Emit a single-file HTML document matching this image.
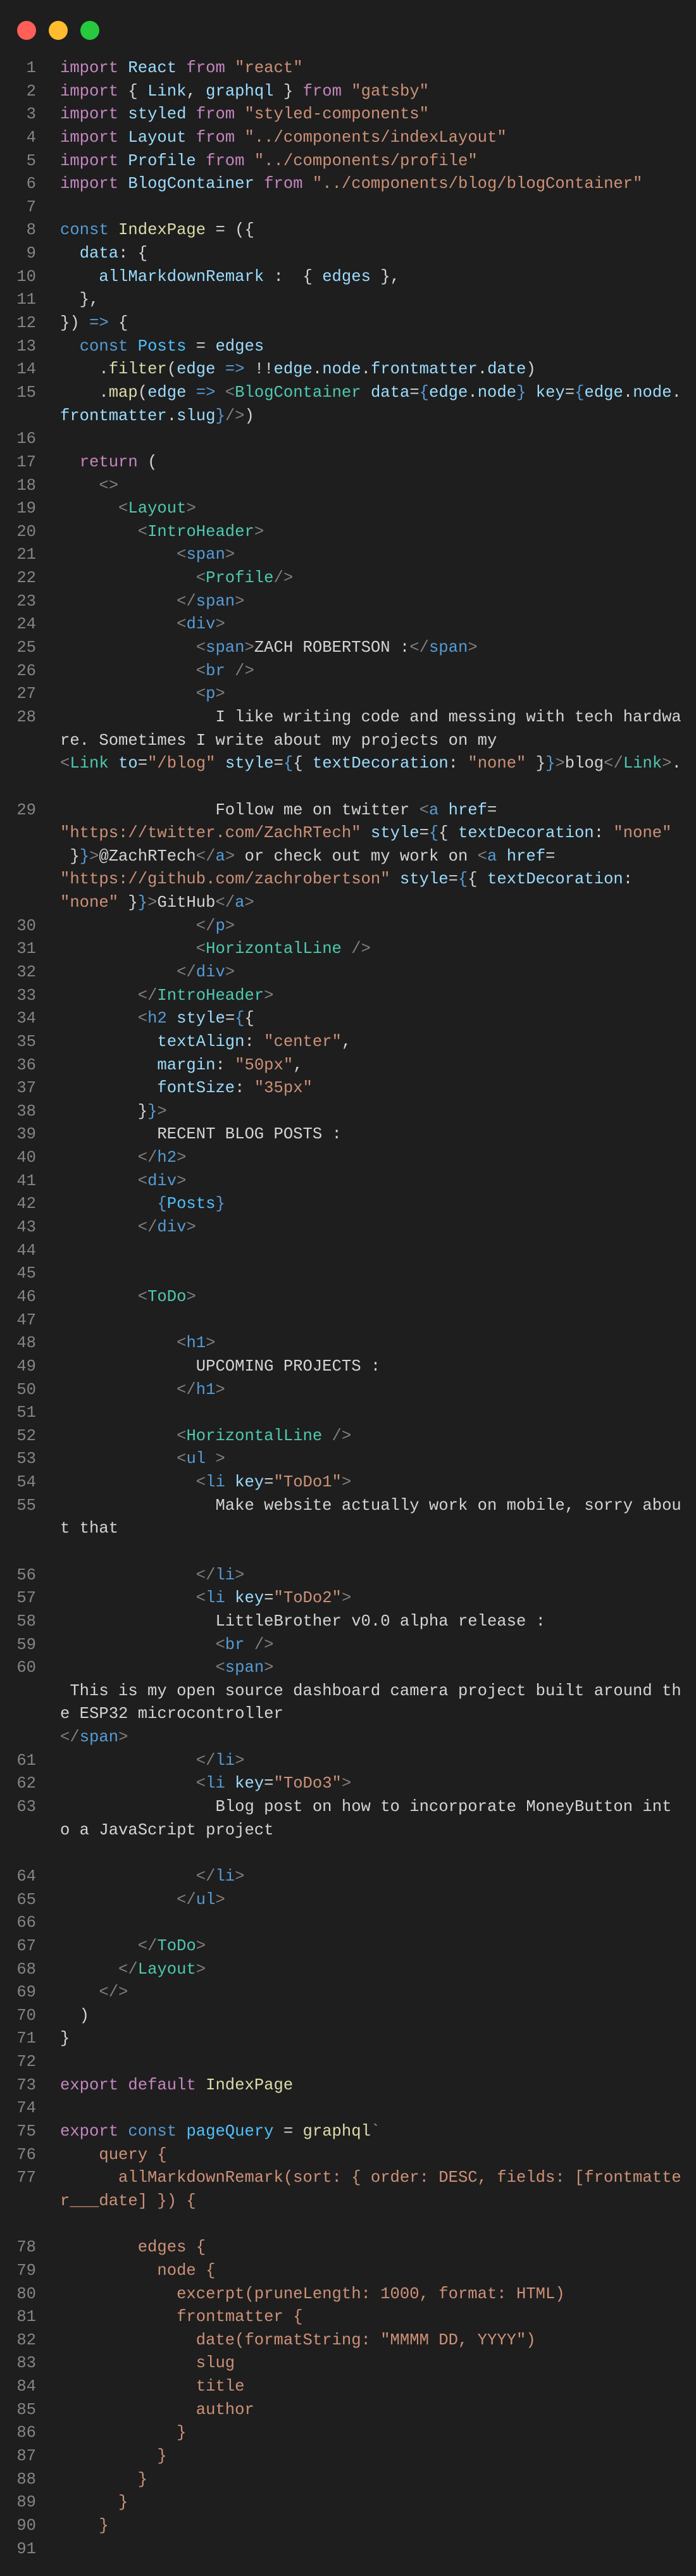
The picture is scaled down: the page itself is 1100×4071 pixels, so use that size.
<!DOCTYPE html>
<html><head><meta charset="utf-8"><style>
html,body{margin:0;padding:0;background:#1e1e1e;}
body{width:1100px;height:4071px;overflow:hidden;position:relative;font-family:"Liberation Mono",monospace;font-size:25.57px;color:#d4d4d4;}
.dot{position:absolute;top:33px;width:30px;height:30px;border-radius:50%;}
#code{position:absolute;top:90px;left:0;width:1100px;}
.r{position:relative;height:36.65px;line-height:36.65px;white-space:pre;padding-left:95px;}
.n{position:absolute;left:0;width:57px;text-align:right;color:#858585;}
.k{color:#c586c0}.b{color:#569cd6}.v{color:#9cdcfe}.s{color:#ce9178}.t{color:#4ec9b0}.g{color:#808080}.y{color:#dcdcaa}.q{color:#4fc1ff}
</style></head><body>
<div class="dot" style="left:27px;background:#ff5f56"></div>
<div class="dot" style="left:77px;background:#ffbd2e"></div>
<div class="dot" style="left:127px;background:#27c93f"></div>
<div id="code">
<div class="r"><span class="n">1</span><span class="k">import</span> <span class="v">React</span> <span class="k">from</span> <span class="s">"react"</span></div>
<div class="r"><span class="n">2</span><span class="k">import</span> { <span class="v">Link</span>, <span class="v">graphql</span> } <span class="k">from</span> <span class="s">"gatsby"</span></div>
<div class="r"><span class="n">3</span><span class="k">import</span> <span class="v">styled</span> <span class="k">from</span> <span class="s">"styled-components"</span></div>
<div class="r"><span class="n">4</span><span class="k">import</span> <span class="v">Layout</span> <span class="k">from</span> <span class="s">"../components/indexLayout"</span></div>
<div class="r"><span class="n">5</span><span class="k">import</span> <span class="v">Profile</span> <span class="k">from</span> <span class="s">"../components/profile"</span></div>
<div class="r"><span class="n">6</span><span class="k">import</span> <span class="v">BlogContainer</span> <span class="k">from</span> <span class="s">"../components/blog/blogContainer"</span></div>
<div class="r"><span class="n">7</span></div>
<div class="r"><span class="n">8</span><span class="b">const</span> <span class="y">IndexPage</span> = ({</div>
<div class="r"><span class="n">9</span>  <span class="v">data</span>: {</div>
<div class="r"><span class="n">10</span>    <span class="v">allMarkdownRemark</span> :  { <span class="v">edges</span> },</div>
<div class="r"><span class="n">11</span>  },</div>
<div class="r"><span class="n">12</span>}) <span class="b">=&gt;</span> {</div>
<div class="r"><span class="n">13</span>  <span class="b">const</span> <span class="q">Posts</span> = <span class="v">edges</span></div>
<div class="r"><span class="n">14</span>    .<span class="y">filter</span>(<span class="v">edge</span> <span class="b">=&gt;</span> !!<span class="v">edge</span>.<span class="v">node</span>.<span class="v">frontmatter</span>.<span class="v">date</span>)</div>
<div class="r"><span class="n">15</span>    .<span class="y">map</span>(<span class="v">edge</span> <span class="b">=&gt;</span> <span class="g">&lt;</span><span class="t">BlogContainer</span> <span class="v">data</span>=<span class="b">{</span><span class="v">edge</span>.<span class="v">node</span><span class="b">}</span> <span class="v">key</span>=<span class="b">{</span><span class="v">edge</span>.<span class="v">node</span>.</div>
<div class="r"><span class="v">frontmatter</span>.<span class="v">slug</span><span class="b">}</span><span class="g">/&gt;</span>)</div>
<div class="r"><span class="n">16</span></div>
<div class="r"><span class="n">17</span>  <span class="k">return</span> (</div>
<div class="r"><span class="n">18</span>    <span class="g">&lt;&gt;</span></div>
<div class="r"><span class="n">19</span>      <span class="g">&lt;</span><span class="t">Layout</span><span class="g">&gt;</span></div>
<div class="r"><span class="n">20</span>        <span class="g">&lt;</span><span class="t">IntroHeader</span><span class="g">&gt;</span></div>
<div class="r"><span class="n">21</span>            <span class="g">&lt;</span><span class="b">span</span><span class="g">&gt;</span></div>
<div class="r"><span class="n">22</span>              <span class="g">&lt;</span><span class="t">Profile</span><span class="g">/&gt;</span></div>
<div class="r"><span class="n">23</span>            <span class="g">&lt;/</span><span class="b">span</span><span class="g">&gt;</span></div>
<div class="r"><span class="n">24</span>            <span class="g">&lt;</span><span class="b">div</span><span class="g">&gt;</span></div>
<div class="r"><span class="n">25</span>              <span class="g">&lt;</span><span class="b">span</span><span class="g">&gt;</span>ZACH ROBERTSON :<span class="g">&lt;/</span><span class="b">span</span><span class="g">&gt;</span></div>
<div class="r"><span class="n">26</span>              <span class="g">&lt;</span><span class="b">br</span> <span class="g">/&gt;</span></div>
<div class="r"><span class="n">27</span>              <span class="g">&lt;</span><span class="b">p</span><span class="g">&gt;</span></div>
<div class="r"><span class="n">28</span>                I like writing code and messing with tech hardwa</div>
<div class="r">re. Sometimes I write about my projects on my</div>
<div class="r"><span class="g">&lt;</span><span class="t">Link</span> <span class="v">to</span>=<span class="s">"/blog"</span> <span class="v">style</span>=<span class="b">{</span>{ <span class="v">textDecoration</span>: <span class="s">"none"</span> }<span class="b">}</span><span class="g">&gt;</span>blog<span class="g">&lt;/</span><span class="t">Link</span><span class="g">&gt;</span>.</div>
<div class="r"></div>
<div class="r"><span class="n">29</span>                Follow me on twitter <span class="g">&lt;</span><span class="b">a</span> <span class="v">href</span>=</div>
<div class="r"><span class="s">"https://twitter.com/ZachRTech"</span> <span class="v">style</span>=<span class="b">{</span>{ <span class="v">textDecoration</span>: <span class="s">"none"</span></div>
<div class="r"> }<span class="b">}</span><span class="g">&gt;</span>@ZachRTech<span class="g">&lt;/</span><span class="b">a</span><span class="g">&gt;</span> or check out my work on <span class="g">&lt;</span><span class="b">a</span> <span class="v">href</span>=</div>
<div class="r"><span class="s">"https://github.com/zachrobertson"</span> <span class="v">style</span>=<span class="b">{</span>{ <span class="v">textDecoration</span>:</div>
<div class="r"><span class="s">"none"</span> }<span class="b">}</span><span class="g">&gt;</span>GitHub<span class="g">&lt;/</span><span class="b">a</span><span class="g">&gt;</span></div>
<div class="r"><span class="n">30</span>              <span class="g">&lt;/</span><span class="b">p</span><span class="g">&gt;</span></div>
<div class="r"><span class="n">31</span>              <span class="g">&lt;</span><span class="t">HorizontalLine</span> <span class="g">/&gt;</span></div>
<div class="r"><span class="n">32</span>            <span class="g">&lt;/</span><span class="b">div</span><span class="g">&gt;</span></div>
<div class="r"><span class="n">33</span>        <span class="g">&lt;/</span><span class="t">IntroHeader</span><span class="g">&gt;</span></div>
<div class="r"><span class="n">34</span>        <span class="g">&lt;</span><span class="b">h2</span> <span class="v">style</span>=<span class="b">{</span>{</div>
<div class="r"><span class="n">35</span>          <span class="v">textAlign</span>: <span class="s">"center"</span>,</div>
<div class="r"><span class="n">36</span>          <span class="v">margin</span>: <span class="s">"50px"</span>,</div>
<div class="r"><span class="n">37</span>          <span class="v">fontSize</span>: <span class="s">"35px"</span></div>
<div class="r"><span class="n">38</span>        }<span class="b">}</span><span class="g">&gt;</span></div>
<div class="r"><span class="n">39</span>          RECENT BLOG POSTS :</div>
<div class="r"><span class="n">40</span>        <span class="g">&lt;/</span><span class="b">h2</span><span class="g">&gt;</span></div>
<div class="r"><span class="n">41</span>        <span class="g">&lt;</span><span class="b">div</span><span class="g">&gt;</span></div>
<div class="r"><span class="n">42</span>          <span class="b">{</span><span class="q">Posts</span><span class="b">}</span></div>
<div class="r"><span class="n">43</span>        <span class="g">&lt;/</span><span class="b">div</span><span class="g">&gt;</span></div>
<div class="r"><span class="n">44</span></div>
<div class="r"><span class="n">45</span></div>
<div class="r"><span class="n">46</span>        <span class="g">&lt;</span><span class="t">ToDo</span><span class="g">&gt;</span></div>
<div class="r"><span class="n">47</span></div>
<div class="r"><span class="n">48</span>            <span class="g">&lt;</span><span class="b">h1</span><span class="g">&gt;</span></div>
<div class="r"><span class="n">49</span>              UPCOMING PROJECTS :</div>
<div class="r"><span class="n">50</span>            <span class="g">&lt;/</span><span class="b">h1</span><span class="g">&gt;</span></div>
<div class="r"><span class="n">51</span></div>
<div class="r"><span class="n">52</span>            <span class="g">&lt;</span><span class="t">HorizontalLine</span> <span class="g">/&gt;</span></div>
<div class="r"><span class="n">53</span>            <span class="g">&lt;</span><span class="b">ul</span> <span class="g">&gt;</span></div>
<div class="r"><span class="n">54</span>              <span class="g">&lt;</span><span class="b">li</span> <span class="v">key</span>=<span class="s">"ToDo1"</span><span class="g">&gt;</span></div>
<div class="r"><span class="n">55</span>                Make website actually work on mobile, sorry abou</div>
<div class="r">t that</div>
<div class="r"></div>
<div class="r"><span class="n">56</span>              <span class="g">&lt;/</span><span class="b">li</span><span class="g">&gt;</span></div>
<div class="r"><span class="n">57</span>              <span class="g">&lt;</span><span class="b">li</span> <span class="v">key</span>=<span class="s">"ToDo2"</span><span class="g">&gt;</span></div>
<div class="r"><span class="n">58</span>                LittleBrother v0.0 alpha release :</div>
<div class="r"><span class="n">59</span>                <span class="g">&lt;</span><span class="b">br</span> <span class="g">/&gt;</span></div>
<div class="r"><span class="n">60</span>                <span class="g">&lt;</span><span class="b">span</span><span class="g">&gt;</span></div>
<div class="r"> This is my open source dashboard camera project built around th</div>
<div class="r">e ESP32 microcontroller</div>
<div class="r"><span class="g">&lt;/</span><span class="b">span</span><span class="g">&gt;</span></div>
<div class="r"><span class="n">61</span>              <span class="g">&lt;/</span><span class="b">li</span><span class="g">&gt;</span></div>
<div class="r"><span class="n">62</span>              <span class="g">&lt;</span><span class="b">li</span> <span class="v">key</span>=<span class="s">"ToDo3"</span><span class="g">&gt;</span></div>
<div class="r"><span class="n">63</span>                Blog post on how to incorporate MoneyButton int</div>
<div class="r">o a JavaScript project</div>
<div class="r"></div>
<div class="r"><span class="n">64</span>              <span class="g">&lt;/</span><span class="b">li</span><span class="g">&gt;</span></div>
<div class="r"><span class="n">65</span>            <span class="g">&lt;/</span><span class="b">ul</span><span class="g">&gt;</span></div>
<div class="r"><span class="n">66</span></div>
<div class="r"><span class="n">67</span>        <span class="g">&lt;/</span><span class="t">ToDo</span><span class="g">&gt;</span></div>
<div class="r"><span class="n">68</span>      <span class="g">&lt;/</span><span class="t">Layout</span><span class="g">&gt;</span></div>
<div class="r"><span class="n">69</span>    <span class="g">&lt;/&gt;</span></div>
<div class="r"><span class="n">70</span>  )</div>
<div class="r"><span class="n">71</span>}</div>
<div class="r"><span class="n">72</span></div>
<div class="r"><span class="n">73</span><span class="k">export</span> <span class="k">default</span> <span class="y">IndexPage</span></div>
<div class="r"><span class="n">74</span></div>
<div class="r"><span class="n">75</span><span class="k">export</span> <span class="b">const</span> <span class="q">pageQuery</span> = <span class="y">graphql</span><span class="s">`</span></div>
<div class="r"><span class="n">76</span><span class="s">    query {</span></div>
<div class="r"><span class="n">77</span><span class="s">      allMarkdownRemark(sort: { order: DESC, fields: [frontmatte</span></div>
<div class="r"><span class="s">r___date] }) {</span></div>
<div class="r"></div>
<div class="r"><span class="n">78</span><span class="s">        edges {</span></div>
<div class="r"><span class="n">79</span><span class="s">          node {</span></div>
<div class="r"><span class="n">80</span><span class="s">            excerpt(pruneLength: 1000, format: HTML)</span></div>
<div class="r"><span class="n">81</span><span class="s">            frontmatter {</span></div>
<div class="r"><span class="n">82</span><span class="s">              date(formatString: "MMMM DD, YYYY")</span></div>
<div class="r"><span class="n">83</span><span class="s">              slug</span></div>
<div class="r"><span class="n">84</span><span class="s">              title</span></div>
<div class="r"><span class="n">85</span><span class="s">              author</span></div>
<div class="r"><span class="n">86</span><span class="s">            }</span></div>
<div class="r"><span class="n">87</span><span class="s">          }</span></div>
<div class="r"><span class="n">88</span><span class="s">        }</span></div>
<div class="r"><span class="n">89</span><span class="s">      }</span></div>
<div class="r"><span class="n">90</span><span class="s">    }</span></div>
<div class="r"><span class="n">91</span></div>
</div>
</body></html>
